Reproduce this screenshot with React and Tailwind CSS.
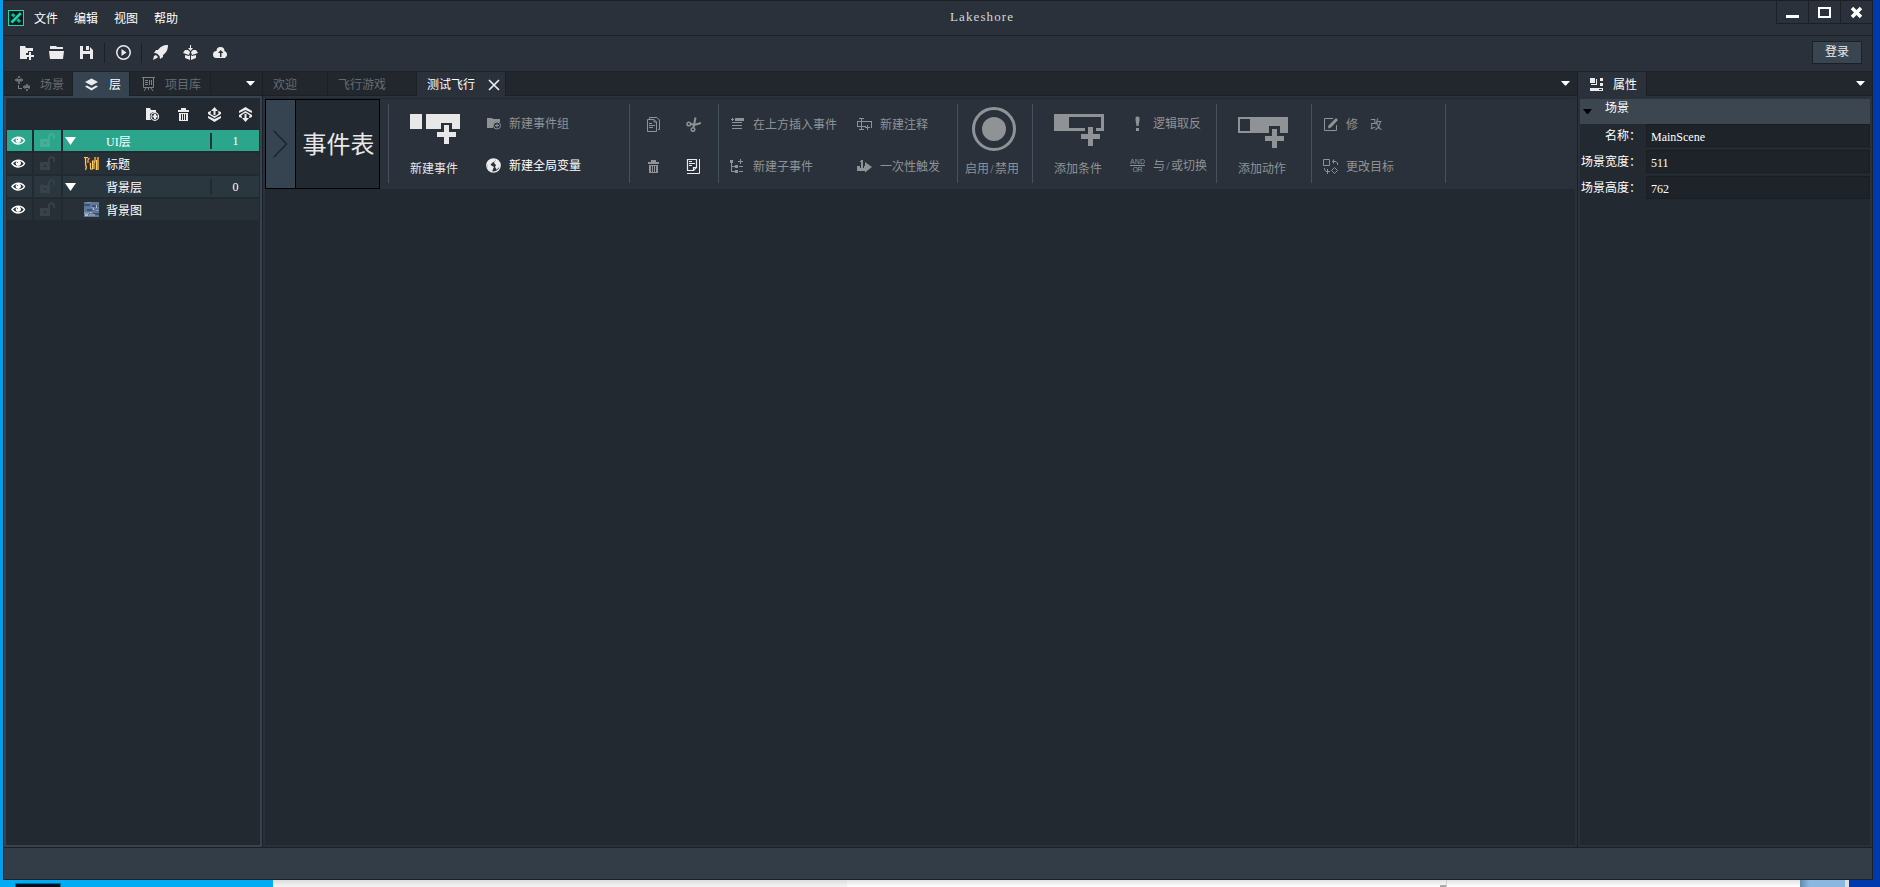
import clsx from "clsx";

const layers = [
  { name: "UI层", order: 1, group: true, active: true },
  { name: "标题", thumb: "title" },
  { name: "背景层", order: 0, group: true },
  { name: "背景图", thumb: "sky" },
];

const fields = [
  { label: "名称：", value: "MainScene" },
  { label: "场景宽度：", value: "511" },
  { label: "场景高度：", value: "762" },
];

export default function App() {
  return (
    <main className="flex h-[887px] w-full flex-col overflow-hidden bg-[#0039ad] font-['Liberation_Serif','Noto_Sans_CJK_SC',serif] text-[12px] leading-none whitespace-nowrap text-white">
      <div className="flex h-[880px]">
        <div className="w-[3px] bg-[#009fe9]" />
        <div className="flex w-[1870px] flex-col border border-[#1b2026] bg-[#2a313a]">
          <TitleBar />
          <Toolbar />
          <div className="flex h-[775px]">
            <LayerPanel />
            <Editor />
            <Properties />
          </div>
          <footer className="flex-1 border-t border-[#1b2026] bg-[#323d48]" />
        </div>
      </div>
      <Desktop />
    </main>
  );
}

function TitleBar() {
  return (
    <header className="flex h-[35px] border-b border-[#1e2329]">
      <div className="flex w-[946px] items-center pl-1">
        <svg width="16" height="16" viewBox="0 0 16 16">
          <rect x=".5" y=".5" width="15" height="15" fill="#0b1c20" stroke="#14dcae" />
          <path d="M4 4l8 8" stroke="#14b894" strokeWidth="3" />
          <path d="M12.300 3.500l-8.500 8.500" stroke="#0b1c20" strokeWidth="4" />
          <path d="M12.800 3.200l-9.300 9.300" stroke="#14dcae" strokeWidth="2.600" />
        </svg>
        <nav className="ml-[10px] flex gap-4 pt-[2px]">
          <span>文件</span>
          <span>编辑</span>
          <span>视图</span>
          <span>帮助</span>
        </nav>
      </div>
      <h1 className="w-[70px] pt-[9px] text-[13px] tracking-[1.100px] text-[#d6d8da]">Lakeshore</h1>
      <div className="flex flex-1 justify-end">
        <div className="flex h-[23px] border-b border-[#1b2026]">
          <WindowButton>
            <path d="M9 14h13v3H9z" fill="#fff" />
          </WindowButton>
          <WindowButton>
            <path d="M10 7h11v9H10z" fill="none" stroke="#fff" strokeWidth="2" />
          </WindowButton>
          <WindowButton>
            <path d="M11 7l9 9m0-9l-9 9" fill="none" stroke="#fff" strokeWidth="3.500" />
          </WindowButton>
        </div>
      </div>
    </header>
  );
}

function WindowButton({ children }) {
  return (
    <button className="w-8 border-l border-[#1b2026]">
      <svg width="31" height="22" viewBox="0 0 31 22">{children}</svg>
    </button>
  );
}

function Toolbar() {
  return (
    <div className="flex h-9 items-center border-b border-[#1e2329] pr-[10px] pb-[2px] pl-[15px] text-[#ececec]">
      <div className="flex items-center gap-[15px]">
        <Icon name="newProject" />
        <Icon name="open" />
        <Icon name="save" />
      </div>
      <div className="ml-[10px] h-5 w-px bg-[#1b2026]" />
      <Icon name="play" className="ml-[11px]" />
      <div className="ml-[10px] h-5 w-px bg-[#1b2026]" />
      <div className="ml-[11px] flex gap-[15px]">
        <Icon name="rocket" />
        <Icon name="pack" />
        <Icon name="cloud" />
      </div>
      <button className="mb-px ml-auto h-[23px] w-[50px] border border-[#1b2026] bg-[#394551]">登录</button>
    </div>
  );
}

function Tab({ icon, active, className, children }) {
  return (
    <div
      className={clsx(
        "flex h-6 items-center border-r border-[#1b2026]",
        active ? "text-white" : "border-b text-[#666c72]",
        className
      )}
    >
      {icon && <Icon name={icon} className={active ? "text-[#ececec]" : "text-[#7d8286]"} />}
      <span className="pt-[2px]">{children}</span>
    </div>
  );
}

function TabRest({ className }) {
  return (
    <div className={clsx("flex h-6 flex-1 items-center justify-end border-b border-[#1b2026]", className)}>
      <svg width="9" height="5" viewBox="0 0 9 5" fill="#fff">
        <path d="M0 0h9L5 4.500H4z" />
      </svg>
    </div>
  );
}

function LayerPanel() {
  return (
    <aside className="flex w-[259px] flex-col border-r border-[#1b2026] bg-[#22272e]">
      <div className="flex">
        <Tab icon="sceneTree" className="w-[69px] gap-[10px] pl-[11px]">场景</Tab>
        <Tab icon="layers" active className="w-[57px] gap-[10px] bg-[#364350] pl-[11px]">层</Tab>
        <Tab icon="board" className="w-[81px] gap-[9px] pl-[11px]">项目库</Tab>
        <TabRest className="pr-[7px]" />
      </div>
      <div className="flex-1 border-2 border-[#364350] bg-[#232931]">
        <div className="flex h-8 items-center justify-end gap-4 pr-[7px] text-[#ececec]">
          <Icon name="addFolder" />
          <Icon name="trash" />
          <Icon name="moveUp" />
          <Icon name="moveDown" />
        </div>
        <div className="flex flex-col gap-[2px] pr-px pl-px">
          {layers.map((layer) => (
            <LayerRow key={layer.name} {...layer} />
          ))}
        </div>
      </div>
    </aside>
  );
}

function LayerRow({ name, order, group, active, thumb }) {
  const bg = active ? "bg-[#2ca58d]" : group ? "bg-[#2b373f]" : "bg-[#272f37]";
  return (
    <div className="flex h-[21px] gap-[2px]">
      <div className={clsx("flex w-[25px] items-center pl-[4px]", bg)}>
        <Icon name="eye" />
      </div>
      <div
        className={clsx(
          "flex w-[27px] items-center pl-[6px]",
          bg,
          active ? "text-[#45ae98]" : "text-[#38424a]"
        )}
      >
        <Icon name="unlock" />
      </div>
      <div className={clsx("flex flex-1 items-center", bg)}>
        <div className="flex w-[43px] items-center pl-[2px]">
          {group && (
            <svg width="11" height="8" viewBox="0 0 11 8" fill="#fff">
              <path d="M0 0h11L5.500 8z" />
            </svg>
          )}
          {thumb === "title" && <TitleThumb />}
          {thumb === "sky" && <SkyThumb />}
        </div>
        <span className="flex-1 pt-[2px]">{name}</span>
        {group && <i className={clsx("mr-px h-4 w-[2px]", active ? "bg-[#17353a]" : "bg-[#232931]")} />}
        {group && <span className="w-[46px] pt-px pr-px text-center">{order}</span>}
      </div>
    </div>
  );
}

function TitleThumb() {
  return (
    <svg className="ml-[19px] shrink-0" width="15" height="15" viewBox="0 0 15 15" fill="none">
      <path d="M0 2h5M2 2v11M6 5v5M9 5v8M11.500 1v13M14 1v13" stroke="#6d4220" strokeWidth="2.200" />
      <path
        d="M0 1.500h4M1.500 2v7l1 2-1 3M5.500 2L4 4v3M6.500 7v6h2V5h1.500M11 1v4l-1 2v6M14 1v13M12.500 4v10"
        stroke="#f8cb65"
        strokeWidth="1.100"
      />
    </svg>
  );
}

function SkyThumb() {
  return (
    <svg className="ml-[19px] shrink-0" width="15" height="15" viewBox="0 0 15 15">
      <path fill="#5f7799" d="M0 0h15v15H0z" />
      <path fill="#38547d" d="M0 2h6v2H0zM8 3h6v2H8zM3 7h5v2H3zM9 11h6v2H9z" />
      <path fill="#8495ad" d="M0 10h5v2H0zM5 12h6v2H5zM7 5h3v1H7zM12 8h3v1h-3zM3 0h4v1H3z" />
      <path fill="#b4bcc6" d="M1 12h3v2H1zM9 6h1v2H9zM12 3h1v3h-1zM6 10h2v1H6z" />
    </svg>
  );
}

function Editor() {
  return (
    <section className="flex w-[1315px] flex-col border-r border-[#1b2026] bg-[#2a313a]">
      <div className="flex bg-[#22272e]">
        <Tab className="w-[65px] pl-[10px]">欢迎</Tab>
        <Tab className="w-[89px] pl-[10px]">飞行游戏</Tab>
        <Tab active className="w-[89px] bg-[#2a313a] pl-[10px]">
          <span className="flex items-center gap-[13px]">
            测试飞行
            <svg width="12" height="12" viewBox="0 0 12 12">
              <path d="M1 1l10 10M11 1L1 11" stroke="#ececec" strokeWidth="1.700" />
            </svg>
          </span>
        </Tab>
        <TabRest className="pr-[7px]" />
      </div>
      <div className="mx-[2px] mt-[2px] mb-[2px] flex flex-1 flex-col border-t border-[#232931] bg-[#232931]">
        <Ribbon />
      </div>
    </section>
  );
}

function Ribbon() {
  return (
    <div className="flex h-[90px] bg-[#2a313a] text-[#8f9396]">
      <div className="flex w-[115px] border border-black bg-[#232931]">
        <div className="flex w-[30px] items-center justify-center border-r border-black bg-[#364350]">
          <svg width="15" height="28" viewBox="0 0 15 28" fill="none">
            <path d="M1 1l12.500 13L1 27" stroke="#1d242b" strokeWidth="1.500" />
          </svg>
        </div>
        <span className="flex flex-1 items-center justify-center pt-[2px] pl-[2px] text-[24px] text-[#e8e8e8]">事件表</span>
      </div>
      <div className="w-2" />

      <Group className="w-[240px]">
        <BigButton label="新建事件" className="ml-[21px] pt-[15px] text-[#e8e8e8]">
          <path d="M0 0h12v15H0zM16 0h34v15h-8V9H31v6H16z" />
          <path d="M34 11h5v7h7v5h-7v7h-5v-7h-7v-5h7z" />
        </BigButton>
        <div className="ml-[25px] flex flex-col gap-[22px] pt-[14px]">
          <Item icon="eventGroup">新建事件组</Item>
          <Item icon="globe" enabled>新建全局变量</Item>
        </div>
      </Group>

      <Group className="w-[88px]">
        <div className="ml-4 grid grid-cols-[15px_15px] grid-rows-[20px_20px] items-center gap-x-[25px] gap-y-[22px] pt-[15px]">
          <Icon name="copy" />
          <Icon name="cut" />
          <Icon name="trash" />
          <Icon name="paste" className="text-[#ececec]" />
        </div>
      </Group>

      <Group className="w-[238px]">
        <div className="ml-[11px] flex flex-col gap-[22px] pt-[15px]">
          <Item icon="insertAbove">在上方插入事件</Item>
          <Item icon="subEvent">新建子事件</Item>
        </div>
        <div className="ml-[20px] flex flex-col gap-[22px] pt-[15px]">
          <Item icon="comment">新建注释</Item>
          <Item icon="once">一次性触发</Item>
        </div>
      </Group>

      <Group className="w-[74px]">
        <div className="ml-[7px] flex w-[58px] flex-col items-center pt-[8px]">
          <svg width="44" height="44" viewBox="0 0 44 44">
            <circle cx="22" cy="22" r="20.500" fill="none" stroke="currentColor" strokeWidth="3" />
            <circle cx="22" cy="22" r="12" fill="currentColor" />
          </svg>
          <span className="mt-[12px] self-start">启用<Slash />禁用</span>
        </div>
      </Group>

      <Group className="w-[183px]">
        <BigButton label="添加条件" className="ml-[21px] pt-[15px]">
          <path d="M0 0h50v17h-8v-3h5V3H15v11h16v3H0z" />
          <path d="M34 13h5v7h7v5h-7v7h-5v-7h-7v-5h7z" />
        </BigButton>
        <div className="ml-[25px] flex flex-col gap-[22px] pt-[14px]">
          <Item icon="bang">逻辑取反</Item>
          <Item icon="andOr">与<Slash />或切换</Item>
        </div>
      </Group>

      <Group className="w-[94px]">
        <BigButton label="添加动作" className="ml-[21px] pt-[18px]">
          <path d="M0 0h50v16h-8V9H31v7H0zM2 2v12h10V2z" fillRule="evenodd" />
          <path d="M34 12h5v7h7v5h-7v7h-5v-7h-7v-5h7z" />
        </BigButton>
      </Group>

      <Group className="w-[133px]">
        <div className="ml-[11px] flex flex-col gap-[22px] pt-[15px]">
          <Item icon="edit">修<span className="inline-block w-3" />改</Item>
          <Item icon="retarget">更改目标</Item>
        </div>
      </Group>
      <div className="mt-[5px] h-[79px] w-px bg-[#44525f]" />
    </div>
  );
}

function Slash() {
  return <span className="inline-block w-[6px] text-center">/</span>;
}

function Group({ className, children }) {
  return (
    <>
      <div className="mt-[5px] h-[79px] w-px bg-[#44525f]" />
      <div className={clsx("flex", className)}>{children}</div>
    </>
  );
}

function BigButton({ label, className, children }) {
  return (
    <div className={clsx("flex w-[51px] flex-col justify-between pb-[14px]", className)}>
      <svg width="50" height="32" viewBox="0 0 50 32" fill="currentColor" shapeRendering="crispEdges">
        {children}
      </svg>
      <span>{label}</span>
    </div>
  );
}

function Item({ icon, enabled, children }) {
  return (
    <div className={clsx("flex h-5 items-center gap-[8px]", enabled && "text-white")}>
      <Icon name={icon} />
      <span className="pt-[2px]">{children}</span>
    </div>
  );
}

function Properties() {
  return (
    <aside className="flex w-[294px] flex-col bg-[#2a313a]">
      <div className="flex bg-[#22272e]">
        <Tab icon="props" active className="w-[69px] gap-[9px] bg-[#2a313a] pl-[11px]">属性</Tab>
        <TabRest className="pr-[7px]" />
      </div>
      <div className="mx-[2px] mt-[3px] mb-[2px] flex-1 bg-[#232931]">
        <h2 className="flex h-[25px] bg-[#3b4651] pt-[3px] pl-[3px]">
          <svg className="mt-[7px] mr-[13px]" width="9" height="5" viewBox="0 0 9 5">
            <path d="M0 0h9L5 5H4z" />
          </svg>
          场景
        </h2>
        <div className="flex flex-col gap-[3px]">
          {fields.map((field) => (
            <label key={field.label} className="flex h-[23px] items-center">
              <span className="w-[66px] pt-px pr-[5px] text-right">{field.label}</span>
              <span className="flex h-[23px] flex-1 items-center border border-[#1a1e23] bg-[#1e2329] pt-[3px] pl-1">
                {field.value}
              </span>
            </label>
          ))}
        </div>
      </div>
    </aside>
  );
}

// strip of the desktop and taskbar visible below the window
function Desktop() {
  return (
    <div className="flex h-[7px]">
      <div className="flex w-[273px] items-end bg-[#00acf3] pl-[15px]">
        <div className="h-1 w-[46px] border border-b-0 border-[#006a9c] bg-[#04101c]" />
      </div>
      <div className="w-[574px] bg-linear-to-b from-[#dcdcdc] to-[#f5f5f5]" />
      <div className="flex w-[600px] items-end justify-end border-r border-[#d0d0d0] bg-linear-to-b from-[#e2e2e2] to-white">
        <div className="h-[2px] w-[6px] bg-[#a8a8a8]" />
      </div>
      <div className="w-[353px] bg-linear-to-b from-[#e2e2e2] to-white" />
      <div className="w-[45px] bg-linear-to-r from-[#6288aa] to-[#8ab7df] to-20%" />
      <div className="w-1 bg-[#dedede]" />
    </div>
  );
}

// all small icons share a 15px grid
const icons = {
  newProject: (
    <>
      <path d="M1 1h5l1 2h7v3h-5v2H7v4h1v2H1z" />
      <path d="M10 7h2v3h3v2h-3v3h-2v-3H7v-2h3z" />
    </>
  ),
  open: <path d="M1 1h6l1 1h6v2H1zM0 6h15l-1 8H1z" />,
  save: <path d="M1 1h3v5h7V2l3 3v9h-3V9H4v5H1zM7 1h3v4H7z" />,
  play: (
    <>
      <circle cx="7.500" cy="7.500" r="6.700" fill="none" stroke="currentColor" strokeWidth="1.500" />
      <path d="M5.500 4v7l5-3.500z" />
    </>
  ),
  rocket: (
    <>
      <path d="M15 0c-5 0-8 2-10 5H3L1 8l3 .500L6.500 11l.500 3 3-2v-2c3-2 5-5 5-10z" />
      <path d="M3 10l2 2-1 1-4 2 1-4z" />
    </>
  ),
  pack: (
    <>
      <path d="M7 0h1v3h2L7.500 6 5 3h2z" />
      <path d="M2 5h3l2 2-1 3-6-2zM13 5h-3L8 7l1 3 6-2zM2 10l4 1 1-1v5l-5-2zM13 10l-4 1-1-1v5l5-2z" />
    </>
  ),
  cloud: (
    <path
      fillRule="evenodd"
      d="M3.500 6a4 4 0 018 0A3.800 3.800 0 0112 13H3.500A3.500 3.500 0 013.500 6zM7 12h1.500V8h2L7.700 5 5 8h2z"
    />
  ),
  sceneTree: (
    <>
      <path d="M3 0h2v2H3zM3 5h2v3H3zM0 3h3v2H0zM5 3h3v2H5zM11 8h2v2h-2zM11 13h2v2h-2zM8 10h3v2H8zM13 10h2v2h-2z" fillOpacity=".75" />
      <path d="M1.500 2.500l5 3m0-3l-5 3M9.500 9.500l5 3m0-3l-5 3M3.500 9v3.500H7" fill="none" stroke="currentColor" />
    </>
  ),
  layers: (
    <>
      <path d="M7.500 1.500L14 5 7.500 8.500 1 5z" />
      <path d="M1 9.500l2-1 4.500 2.500L12 8.500l2 1-6.500 4z" />
    </>
  ),
  board: (
    <g fill="none" stroke="currentColor">
      <path d="M1 1.500h13M2.500 2v9.500h10V2M5 12l-2 3M10 12l2 3M7.500 12v2M4 4.500h3M4 6.500h3M4 8.500h3M8.500 4v5M10.500 4v5" />
    </g>
  ),
  addFolder: (
    <>
      <path d="M1 1h4l1 2h5v2H8L5 7v4l1 2H1z" />
      <circle cx="9.800" cy="9.500" r="3.800" fill="none" stroke="currentColor" strokeWidth="1.200" />
      <path d="M9 7h2v1.500h1.500v2H11V12H9v-1.500H7.500v-2H9z" />
    </>
  ),
  trash: (
    <path
      fillRule="evenodd"
      d="M5 1h5v2h3v2H2V3h3zM3 6h9v8H3zM5 7v6h1V7zM7 7v6h1V7zM9 7v6h1V7z"
    />
  ),
  moveUp: (
    <path d="M7.500 0L11 4H8.500v4h-2V4H4zM1 5l3-1v1.500L3 6l2 2 2.500 1L10 8l2-2-1-.500V4l3 1v2l-6.500 4L1 7zM1 9l6.500 3L14 9v2l-6.500 4L1 11z" />
  ),
  moveDown: (
    <path d="M7.500 15L4 11h2.500V7h2v4H11zM1 4l6.500-4L14 4v2L7.500 3 1 6zM1 8l6.500-4L14 8v2l-3 1V9.500l1-.500-2-2-2.500-1L5 7 3 9l1 .500V11l-3-1z" />
  ),
  eye: (
    <g fill="none" stroke="#fff">
      <path d="M1 7.500c3-4.500 10-4.500 12.500 0-2.500 4.500-9.500 4.500-12.500 0z" strokeWidth="1.500" />
      <circle cx="7.300" cy="7.300" r="2.200" fill="#fff" />
      <path d="M6 6.500h1" stroke="#59646c" />
    </g>
  ),
  unlock: (
    <>
      <path fillRule="evenodd" d="M0 6h10v8H0zM4 9v2h2V9z" />
      <path d="M8.800 6V3.500C9.500 .500 14 .500 14 3.500V6" fill="none" stroke="currentColor" strokeWidth="1.800" />
    </>
  ),
  eventGroup: (
    <>
      <path d="M1 2h5l1 1h7v3L9 6 7 9v3H1z" />
      <circle cx="11" cy="9.500" r="3.500" fill="none" stroke="currentColor" />
      <path d="M10.500 7.500h1v1.500h1.500v1h-1.500v1.500h-1V10H9V9h1.500z" />
    </>
  ),
  globe: (
    <>
      <circle cx="7.500" cy="7.500" r="6.700" fill="none" stroke="#ececec" strokeWidth="1.300" />
      <path fill="#ececec" d="M1 4l4-3h4v2L6 5 4.500 7 8 9l-1 2-1 3-4-3-1-5zM10 1l4 4v4l-2 1-1 2-2-3 1-2-2-2z" />
    </>
  ),
  copy: (
    <g fill="none" stroke="currentColor">
      <path d="M3.500 2V.500H11L13.500 3v9.500H12M1.500 2.500H8L10.500 5v9.500h-9zM8 2.500V5h2.500M3 6.500h3M3 8.500h6M3 10.500h4" />
    </g>
  ),
  cut: (
    <g fill="none" stroke="currentColor">
      <circle cx="2.800" cy="7" r="1.800" strokeWidth="1.500" />
      <circle cx="7" cy="12.500" r="1.800" strokeWidth="1.500" />
      <path d="M5 7l3.500 1L15 6M7.500 10.500L8 8l1.500-7.500" strokeWidth="2" />
    </g>
  ),
  paste: (
    <g fill="none" stroke="currentColor">
      <path d="M1.500.500h9v8l-3 3h-6zM7.500 11V8.500h3M3 2.500h3M3 4.500h6M3 6.500h3" strokeWidth="1.200" />
      <path d="M13.500 0v14.500H1" />
    </g>
  ),
  insertAbove: <path d="M1 2h1V1h1v1h1v1H3v1H2V3H1zM5 1h9v3H5zM2 5h10v1H2zM2 8h10v1H2zM2 11h10v1H2z" />,
  subEvent: (
    <path d="M0 1h3v3H2v3h3v1H2v4h3v1H1V4H0zM5 6h3v3H5zM9 7h4v1H9zM5 11h3v3H5zM9 12h4v1H9zM10 0h1v2h2v1h-2v2h-1V3H8V2h2z" />
  ),
  comment: (
    <path d="M2 1h5v1H5v2h10v7h-1V5H5v4h4v1H5v2h2v1H2v-1h2v-2H0V4h4V2H2zM1 5v4h3V5zM10 8h1v2h2v1h-2v2h-1v-2H8v-1h2z" />
  ),
  once: <path d="M0 7h3v2h1V3H3V2h1V1h2v8h1V7H8V3l7 5-7 5.500V12H0z" />,
  bang: <path d="M5.500 2c0-2 4-2 4 0v2L8.500 10h-2L5.500 4zM6 12h3v3H6z" />,
  andOr: (
    <g fontFamily="Liberation Sans" fontSize="7" textAnchor="middle">
      <text x="7.500" y="5.700" textLength="15">AND</text>
      <path d="M0 7h15v1H0z" />
      <text x="7.500" y="14" textLength="10">OR</text>
    </g>
  ),
  edit: (
    <>
      <path d="M10 1.500H1.500v12h12V8" fill="none" stroke="currentColor" />
      <path d="M13 1l2 2L8 10.500l-3 1 .500-3z" />
    </>
  ),
  retarget: (
    <g fill="none" stroke="currentColor">
      <path d="M.500.500h6v6h-6zM11.500 8.500l3 3-3 3-3-3zM9 2.500h4l1.500 1.500V6M10.500 .500v4M1.500 9v1.500l1.500 2h4M4.500 10v5" />
    </g>
  ),
  props: <path d="M1 1h5v5H1zM7 2h1v6H2V7h5zM11 1h3v3h-3zM11 6h3v3h-3zM1 11h13v3H1zM10 12v1h3v-1z" fillRule="evenodd" />,
};

function Icon({ name, className }) {
  return (
    <svg width="15" height="15" viewBox="0 0 15 15" fill="currentColor" className={clsx("shrink-0", className)}>
      {icons[name]}
    </svg>
  );
}
